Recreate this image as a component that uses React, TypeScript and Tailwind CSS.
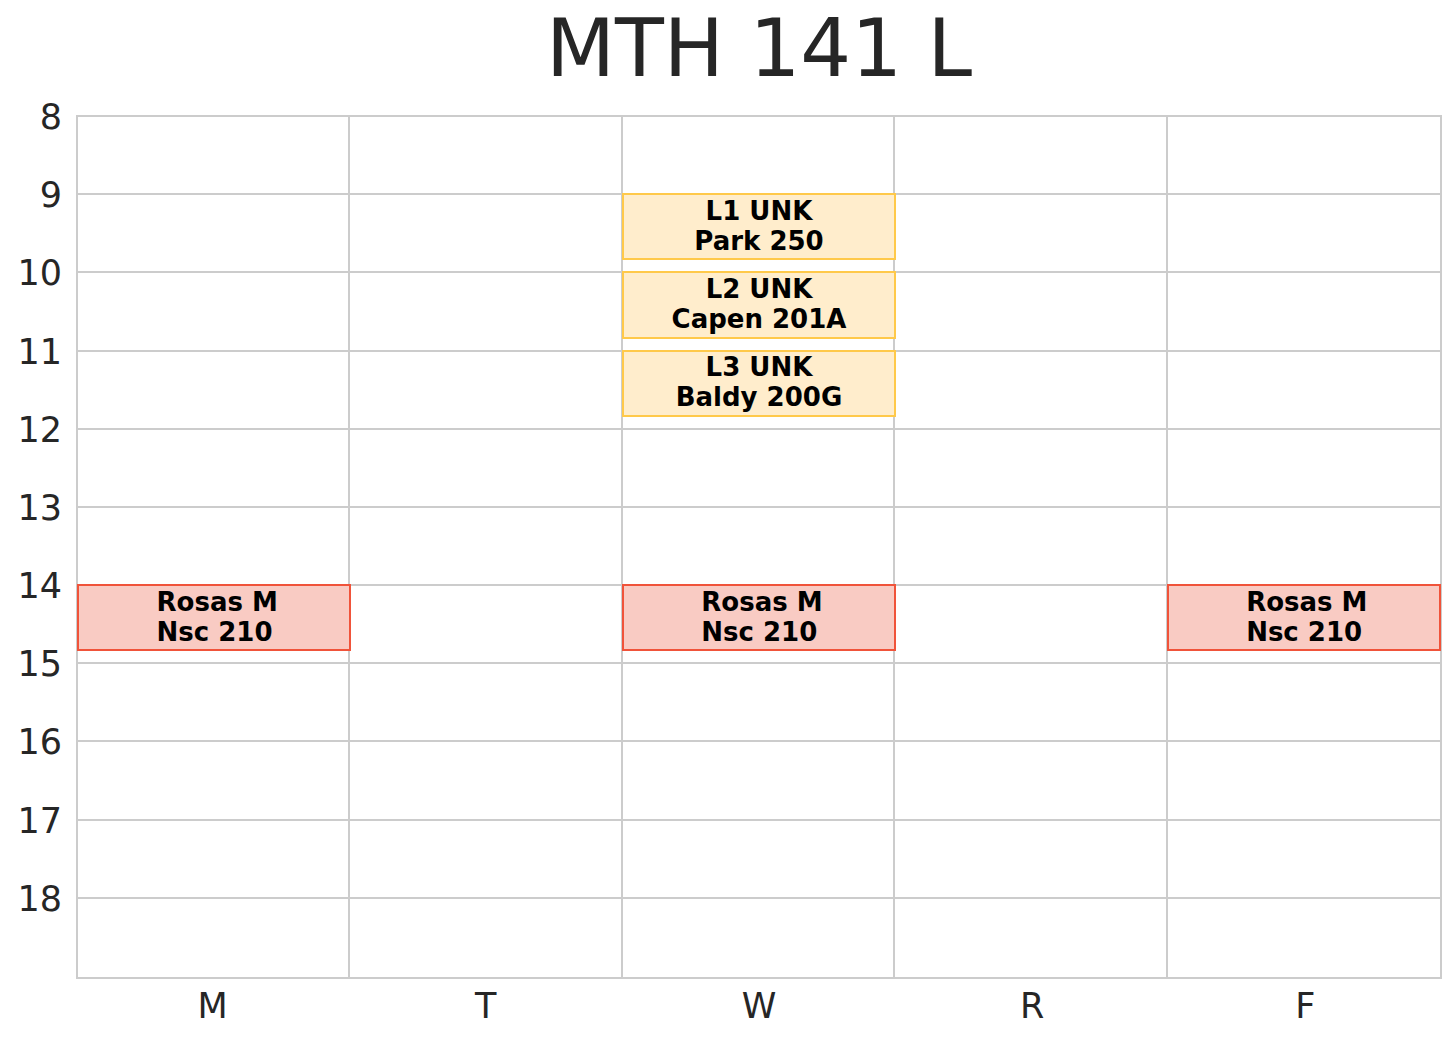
import React from 'react';

type Block = {
  day: number;
  start: number;
  lines: string[];
  kind: 'lab' | 'lecture';
};

const DAYS = ['M', 'T', 'W', 'R', 'F'];
const HOURS = [8, 9, 10, 11, 12, 13, 14, 15, 16, 17, 18];
const COL_W = 1362 / 5;
const ROW_H = 860 / 11;

const blocks: Block[] = [
  { day: 2, start: 9, lines: ['L1 UNK', 'Park 250'], kind: 'lab' },
  { day: 2, start: 10, lines: ['L2 UNK', 'Capen 201A'], kind: 'lab' },
  { day: 2, start: 11, lines: ['L3 UNK', 'Baldy 200G'], kind: 'lab' },
  { day: 0, start: 14, lines: ['Rosas M', 'Nsc 210'], kind: 'lecture' },
  { day: 2, start: 14, lines: ['Rosas M', 'Nsc 210'], kind: 'lecture' },
  { day: 4, start: 14, lines: ['Rosas M', 'Nsc 210'], kind: 'lecture' },
];

const App: React.FC = () => {
  return (
    <div className="w-[1456px] h-[1040px] bg-white text-[#262626] font-['DejaVu_Sans',sans-serif] overflow-hidden">
      {/* title */}
      <div className="h-[115px] pl-[76px] w-[1442px] pt-[9px]">
        <h1 className="text-center text-[80px] leading-none font-normal">MTH 141 L</h1>
      </div>

      <div className="flex">
        {/* hour labels */}
        <div className="w-[76px] pr-[14px] -mt-[15px] flex flex-col">
          {HOURS.map(h => (
            <div key={h} className="h-[78.18px] text-right text-[35px] leading-none">
              {h}
            </div>
          ))}
        </div>

        <div className="flex flex-col">
          {/* plot area */}
          <div className="relative w-[1366px] h-[864px] border-2 border-[#cccccc]">
            <div className="grid grid-cols-5 grid-rows-11 h-full">
              {HOURS.map((h, r) =>
                DAYS.map((d, c) => (
                  <div
                    key={`${h}-${d}`}
                    className={`border-[#cccccc] ${c < 4 ? 'border-r-2' : ''} ${r < 10 ? 'border-b-2' : ''}`}
                  />
                ))
              )}
            </div>

            {blocks.map((b, i) => (
              <div
                key={i}
                className={`absolute flex items-center justify-center border-2 font-bold text-[26px] leading-[30px] text-black pb-[2px] ${
                  b.kind === 'lab'
                    ? 'bg-[#ffedcc] border-[#ffc94a]'
                    : 'bg-[#f9cbc3] border-[#f0533a] pl-[6px]'
                }`}
                style={{
                  left: b.day * COL_W - 1,
                  top: (b.start - 8) * ROW_H - 2,
                  width: COL_W + 2,
                  height: ROW_H * (50 / 60) + 2,
                }}
              >
                <div className={`whitespace-pre ${b.kind === 'lab' ? 'text-center' : 'text-left'}`}>
                  {b.lines.map(l => (
                    <div key={l}>{l}</div>
                  ))}
                </div>
              </div>
            ))}
          </div>

          {/* day labels */}
          <div className="grid grid-cols-5 w-[1366px] mt-[10px]">
            {DAYS.map(d => (
              <div key={d} className="text-center text-[35px] leading-none">
                {d}
              </div>
            ))}
          </div>
        </div>
      </div>
    </div>
  );
};

export default App;
